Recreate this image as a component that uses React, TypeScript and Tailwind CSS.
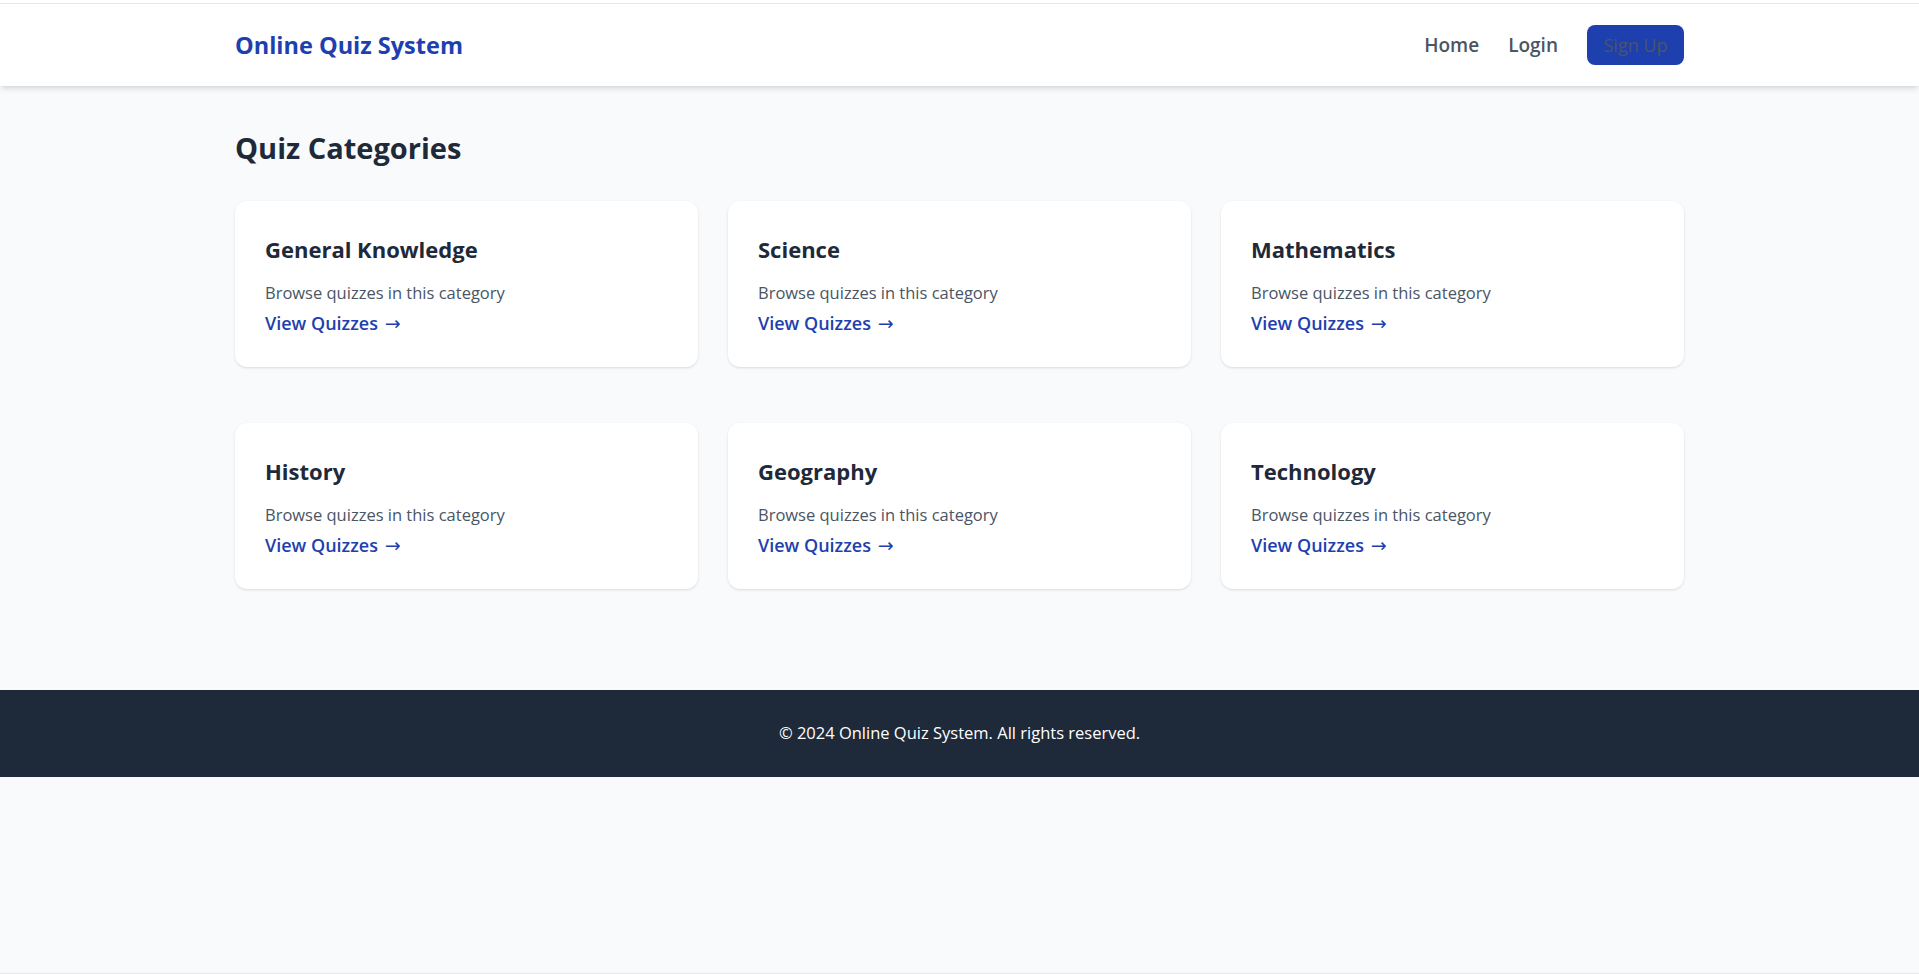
const categories = [
  'General Knowledge',
  'Science',
  'Mathematics',
  'History',
  'Geography',
  'Technology',
];

function Header() {
  return (
    <header className="bg-white border-t border-gray-200 shadow-md relative z-10">
      <div className="mx-auto w-[1449px] h-[82px] flex items-center justify-between">
        <a href="#" className="mt-[2px] text-[23.5px] font-bold text-[#1e40af]">
          Online Quiz System
        </a>
        <nav className="flex items-center">
          <a href="#" className="text-[19px] font-semibold text-gray-600 mr-[29px]">
            Home
          </a>
          <a href="#" className="text-[19px] font-semibold text-gray-600 mr-[29px]">
            Login
          </a>
          <a
            href="#"
            className="w-[97px] h-[40px] flex items-center justify-center rounded-lg bg-[#1e40af] text-[18px] font-medium text-gray-600"
          >
            Sign Up
          </a>
        </nav>
      </div>
    </header>
  );
}

function CategoryCard({ name }: { name: string }) {
  return (
    <div className="bg-white rounded-xl shadow px-[30px] pt-[34px] h-[166px]">
      <h3 className="text-[22px] leading-7 font-bold text-gray-800 mb-[18px]">{name}</h3>
      <p className="text-[16.5px] leading-6 text-gray-600">Browse quizzes in this category</p>
      <a href="#" className="block mt-[4px] text-[18px] leading-7 font-semibold text-[#1e40af]">
        View Quizzes{' '}
        <span className="ml-[2px] font-['DejaVu_Sans',sans-serif] font-normal text-[19px]">→</span>
      </a>
    </div>
  );
}

export default function App() {
  return (
    <div className="min-h-screen flex flex-col bg-gray-50 font-['Open_Sans',sans-serif]">
      <div className="h-[3px] bg-white" />
      <Header />
      <main className="mx-auto w-[1449px] pt-[44px] pb-[101px]">
        <h2 className="text-[29px] leading-9 font-bold text-gray-800 mb-[35px]">Quiz Categories</h2>
        <div className="grid grid-cols-3 gap-x-[30px] gap-y-[56px]">
          {categories.map((c) => (
            <CategoryCard key={c} name={c} />
          ))}
        </div>
      </main>
      <footer className="bg-gray-800 h-[87px] flex items-center justify-center">
        <p className="text-[16.5px] text-white">© 2024 Online Quiz System. All rights reserved.</p>
      </footer>
      <div className="flex-1" />
      <div className="h-px bg-gray-200" />
    </div>
  );
}
